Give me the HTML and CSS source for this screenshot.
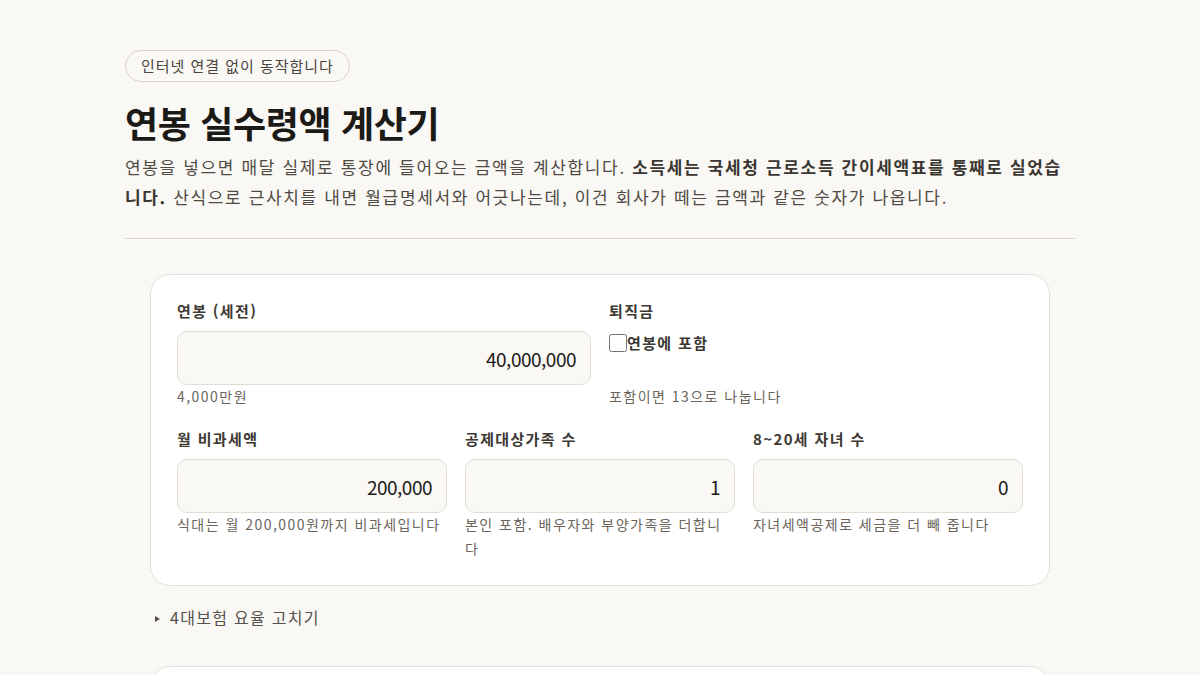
FILE: index.html
```html
<!DOCTYPE html>
<html lang="ko">
<head>
    <meta charset="UTF-8">
    <meta name="viewport" content="width=device-width, initial-scale=1.0">
    <title>연봉 실수령액 계산기</title>
    <link rel="stylesheet" href="styles.css">
</head>
<body>
    <main class="page">
        <span class="badge">인터넷 연결 없이 동작합니다</span>
        <h1>연봉 실수령액 계산기</h1>
        <p class="intro">연봉을 넣으면 매달 실제로 통장에 들어오는 금액을 계산합니다. <strong>소득세는 국세청 근로소득 간이세액표를 통째로 실었습니다.</strong> 산식으로 근사치를 내면 월급명세서와 어긋나는데, 이건 회사가 떼는 금액과 같은 숫자가 나옵니다.</p>
        <hr class="divider">

        <section class="calc">
            <div class="card">
                <div class="row row-2">
                    <div class="field">
                        <label class="field-label" for="salary">연봉 (세전)</label>
                        <input class="field-input" id="salary" type="text" value="40,000,000">
                        <div class="hint">4,000만원</div>
                    </div>
                    <div class="field">
                        <span class="field-label">퇴직금</span>
                        <label class="check">
                            <input type="checkbox">
                            연봉에 포함
                        </label>
                        <div class="hint">포함이면 13으로 나눕니다</div>
                    </div>
                </div>
                <div class="row row-3">
                    <div class="field">
                        <label class="field-label" for="nontax">월 비과세액</label>
                        <input class="field-input" id="nontax" type="text" value="200,000">
                        <div class="hint">식대는 월 200,000원까지 비과세입니다</div>
                    </div>
                    <div class="field">
                        <label class="field-label" for="family">공제대상가족 수</label>
                        <input class="field-input" id="family" type="text" value="1">
                        <div class="hint">본인 포함. 배우자와 부양가족을 더합니다</div>
                    </div>
                    <div class="field">
                        <label class="field-label" for="kids">8~20세 자녀 수</label>
                        <input class="field-input" id="kids" type="text" value="0">
                        <div class="hint">자녀세액공제로 세금을 더 빼 줍니다</div>
                    </div>
                </div>
            </div>

            <details class="rates">
                <summary>4대보험 요율 고치기</summary>
            </details>

            <div class="card result"></div>
        </section>
    </main>
</body>
</html>
```

FILE: styles.css
```css
body, html {
    margin: 0;
    padding: 0;
    background-color: #faf8f5;
    color: #2b2824;
    font-family: "Noto Sans CJK KR", "Noto Sans", sans-serif;
}
.page {
    width: 950px;
    margin: 0 auto;
    padding-top: 50px;
}
.badge {
    display: inline-block;
    padding: 4px 15px;
    border: 1px solid #d9d3c9;
    border-radius: 9999px;
    font-size: 15px;
    line-height: 22px;
    letter-spacing: 0.065em;
    color: #4a453e;
}
h1 {
    margin: 14px 0 4px;
    font-size: 36px;
    line-height: 52px;
    font-weight: 700;
    letter-spacing: -0.01em;
    color: #1c1a17;
}
.intro {
    margin: 0;
    font-size: 17px;
    line-height: 30px;
    letter-spacing: 0.097em;
    color: #4f4a43;
}
.intro strong {
    color: #3a3631;
}
.divider {
    border: none;
    border-top: 1px solid #dcd7ce;
    margin: 26px 0 35px;
}
.calc {
    padding: 0 25px;
}
.card {
    background-color: #fff;
    border: 1px solid #e4dfd6;
    border-radius: 20px;
    padding: 24px 26px 25px;
}
.row {
    display: grid;
    gap: 18px;
}
.row-2 {
    grid-template-columns: 1fr 1fr;
    margin-bottom: 19px;
}
.row-3 {
    grid-template-columns: 1fr 1fr 1fr;
}
.field {
    display: flex;
    flex-direction: column;
}
.field-label {
    font-size: 15px;
    line-height: 24px;
    font-weight: 700;
    letter-spacing: 0.09em;
    color: #3d3933;
    margin-bottom: 8px;
}
.field-input {
    box-sizing: border-box;
    height: 54px;
    width: 100%;
    padding: 0 14px;
    border: 1px solid #e2dcd2;
    border-radius: 10px;
    background-color: #faf8f5;
    font-family: inherit;
    font-size: 19px;
    letter-spacing: -0.5px;
    color: #1c1a17;
    text-align: right;
}
.check {
    display: flex;
    align-items: flex-start;
    height: 54px;
    font-size: 15px;
    font-weight: 700;
    letter-spacing: 0.09em;
    color: #3d3933;
    line-height: 24px;
}
.check input {
    width: 18px;
    height: 18px;
    margin: 3px 0 0;
}
.hint {
    margin-top: -1px;
    font-size: 14px;
    line-height: 24px;
    letter-spacing: 0.105em;
    color: #6b655c;
}
.rates {
    margin: 18px 0 36px;
    font-size: 16px;
    letter-spacing: 0.08em;
    color: #55504a;
}
.rates summary {
    list-style: none;
    cursor: pointer;
    line-height: 26px;
    padding-left: 5px;
}
.rates summary::-webkit-details-marker {
    display: none;
}
.rates summary::before {
    content: "";
    display: inline-block;
    width: 0;
    height: 0;
    border-top: 3px solid transparent;
    border-bottom: 3px solid transparent;
    border-left: 5px solid #55504a;
    margin-right: 10px;
    vertical-align: 2px;
}
.result {
    height: 120px;
}
```
